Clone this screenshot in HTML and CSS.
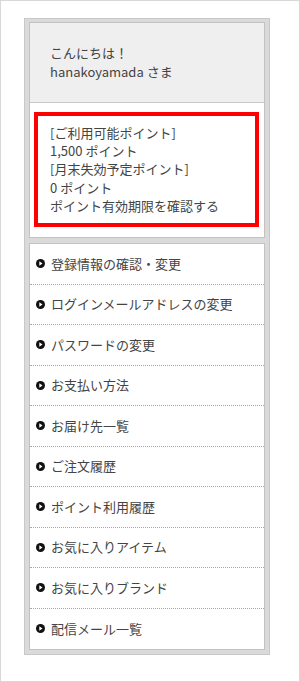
FILE: index.html
```html
<!DOCTYPE html>
<html lang="ja">
<head>
<meta charset="utf-8">
<link rel="stylesheet" href="styles.css">
</head>
<body>
<div class="page">
  <div class="panel">
    <div class="box">
      <div class="greeting">
        <p>こんにちは！</p>
        <p>hanakoyamada さま</p>
      </div>
      <div class="points">
        <div class="points-frame">
          <p>[ご利用可能ポイント]</p>
          <p>1,500 ポイント</p>
          <p>[月末失効予定ポイント]</p>
          <p>0 ポイント</p>
          <p>ポイント有効期限を確認する</p>
        </div>
      </div>
    </div>
    <ul class="menu">
      <li><svg class="bullet" viewBox="0 0 9 9"><circle cx="4.5" cy="4.5" r="4.5"/><path d="M3.3 2.3 L6.5 4.5 L3.3 6.7 Z" fill="#fff"/></svg>登録情報の確認・変更</li>
      <li><svg class="bullet" viewBox="0 0 9 9"><circle cx="4.5" cy="4.5" r="4.5"/><path d="M3.3 2.3 L6.5 4.5 L3.3 6.7 Z" fill="#fff"/></svg>ログインメールアドレスの変更</li>
      <li><svg class="bullet" viewBox="0 0 9 9"><circle cx="4.5" cy="4.5" r="4.5"/><path d="M3.3 2.3 L6.5 4.5 L3.3 6.7 Z" fill="#fff"/></svg>パスワードの変更</li>
      <li><svg class="bullet" viewBox="0 0 9 9"><circle cx="4.5" cy="4.5" r="4.5"/><path d="M3.3 2.3 L6.5 4.5 L3.3 6.7 Z" fill="#fff"/></svg>お支払い方法</li>
      <li><svg class="bullet" viewBox="0 0 9 9"><circle cx="4.5" cy="4.5" r="4.5"/><path d="M3.3 2.3 L6.5 4.5 L3.3 6.7 Z" fill="#fff"/></svg>お届け先一覧</li>
      <li><svg class="bullet" viewBox="0 0 9 9"><circle cx="4.5" cy="4.5" r="4.5"/><path d="M3.3 2.3 L6.5 4.5 L3.3 6.7 Z" fill="#fff"/></svg>ご注文履歴</li>
      <li><svg class="bullet" viewBox="0 0 9 9"><circle cx="4.5" cy="4.5" r="4.5"/><path d="M3.3 2.3 L6.5 4.5 L3.3 6.7 Z" fill="#fff"/></svg>ポイント利用履歴</li>
      <li><svg class="bullet" viewBox="0 0 9 9"><circle cx="4.5" cy="4.5" r="4.5"/><path d="M3.3 2.3 L6.5 4.5 L3.3 6.7 Z" fill="#fff"/></svg>お気に入りアイテム</li>
      <li><svg class="bullet" viewBox="0 0 9 9"><circle cx="4.5" cy="4.5" r="4.5"/><path d="M3.3 2.3 L6.5 4.5 L3.3 6.7 Z" fill="#fff"/></svg>お気に入りブランド</li>
      <li><svg class="bullet" viewBox="0 0 9 9"><circle cx="4.5" cy="4.5" r="4.5"/><path d="M3.3 2.3 L6.5 4.5 L3.3 6.7 Z" fill="#fff"/></svg>配信メール一覧</li>
    </ul>
  </div>
</div>
</body>
</html>
```
FILE: styles.css
```css
* { box-sizing: border-box; }
html, body { margin: 0; padding: 0; background: #fff; }
body {
  font-family: "Noto Sans CJK JP", "Noto Sans", sans-serif;
  font-size: 13px;
  color: #444;
}
p { margin: 0; }
.page {
  width: 300px;
  height: 682px;
  border: 1px solid #d8d8d8;
  padding: 17px 0 0 23px;
}
.panel {
  width: 246px;
  border: 1px solid #c8c8c8;
  background: #dadada;
  padding: 3px 4px 4px 4px;
}
.box {
  border: 1px solid #c2c2c2;
  background: #fff;
}
.greeting {
  background: #efefef;
  border-bottom: 1px solid #c8c8c8;
  padding: 20px 20px 21px;
  line-height: 19px;
}
.points {
  padding: 9px 5px 10px 4px;
}
.points-frame {
  border: 4px solid #ff0000;
  padding: 8px 11px 8px 12px;
  line-height: 18.2px;
}
.menu {
  list-style: none;
  margin: 5px 0 0;
  padding: 0;
  border: 1px solid #c2c2c2;
  background: #fff;
}
.menu li {
  display: flex;
  align-items: center;
  height: 40.5px;
  padding-left: 6px;
  border-bottom: 1px dotted #a8a8a8;
  line-height: 18px;
}
.menu li:last-child {
  border-bottom: none;
  height: 40px;
}
.bullet {
  width: 9px;
  height: 9px;
  margin-right: 6px;
  flex: none;
  fill: #111;
}
```
